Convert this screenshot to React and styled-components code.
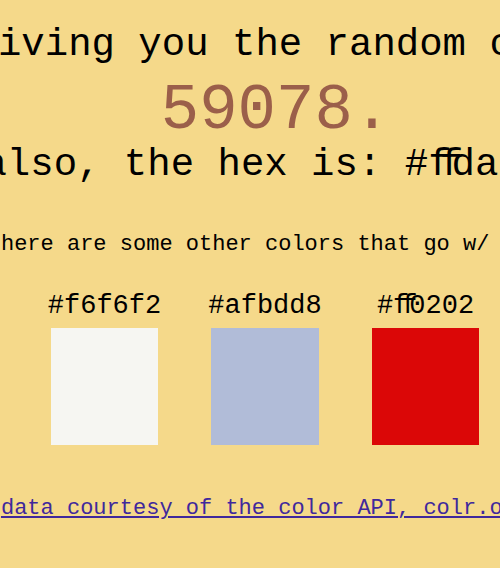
import React from "react";
import styled, { createGlobalStyle } from "styled-components";

const GlobalStyle = createGlobalStyle`
  html, body {
    margin: 0;
    padding: 0;
    background: #f5d98a;
  }
  body {
    font-family: "Liberation Mono", "Courier New", monospace;
    color: #000;
    overflow: hidden;
  }
`;

const swatches = [
  { hex: "#f6f6f2", shown: "#f6f6f2" },
  { hex: "#afbdd8", shown: "#b1bcd8" },
  { hex: "#ff0202", shown: "#db0707" },
];

// renders "ff" squeezed into one cell, like the ligature in the shot
function Hex({ value }) {
  const parts = value.split("ff");
  return parts.map((part, i) => (
    <React.Fragment key={i}>
      {i > 0 && <Lig>ff</Lig>}
      {part}
    </React.Fragment>
  ));
}

export default function App() {
  return (
    <Page>
      <GlobalStyle />
      <Heading $nudge={51}>giving you the random color</Heading>
      <Number $nudge={22}>59078.</Number>
      <Heading $nudge={22}>
        also, the hex is: <Hex value="#ffda8a." />
      </Heading>
      <Note>here are some other colors that go w/ it</Note>
      <Palette>
        {swatches.map((s) => (
          <Swatch key={s.hex}>
            <Label>
              <Hex value={s.hex} />
            </Label>
            <Chip $color={s.shown} />
          </Swatch>
        ))}
      </Palette>
      <Credit href="#">data courtesy of the color API, colr.org</Credit>
    </Page>
  );
}

const Page = styled.main`
  width: 500px;
  height: 568px;
  box-sizing: border-box;
  padding: 23px 0 0 30px;
  display: flex;
  flex-direction: column;
  align-items: center;
  overflow: hidden;
`;

const Heading = styled.div`
  font-size: 39px;
  line-height: 44px;
  white-space: nowrap;
  flex-shrink: 0;
  margin-left: ${(p) => p.$nudge || 0}px;
`;

const Number = styled(Heading)`
  font-size: 64px;
  line-height: 64px;
  margin-top: 12px;
  color: #9b5f4a;
`;

const Lig = styled.span`
  letter-spacing: -0.3em;
`;

const Note = styled.p`
  margin: 45px 0 0;
  font-size: 22px;
  line-height: 25px;
  white-space: nowrap;
`;

const Palette = styled.div`
  margin-top: 34px;
  display: flex;
  gap: 53px;
`;

const Swatch = styled.div`
  width: 107.5px;
  display: flex;
  flex-direction: column;
  align-items: center;
  gap: 6px;
`;

const Label = styled.span`
  font-size: 27px;
  line-height: 31px;
  white-space: nowrap;
`;

const Chip = styled.div`
  width: 107.5px;
  height: 117px;
  background: ${(p) => p.$color};
`;

const Credit = styled.a`
  margin-top: 51px;
  font-size: 22px;
  line-height: 25px;
  white-space: nowrap;
  color: #40289c;
`;
